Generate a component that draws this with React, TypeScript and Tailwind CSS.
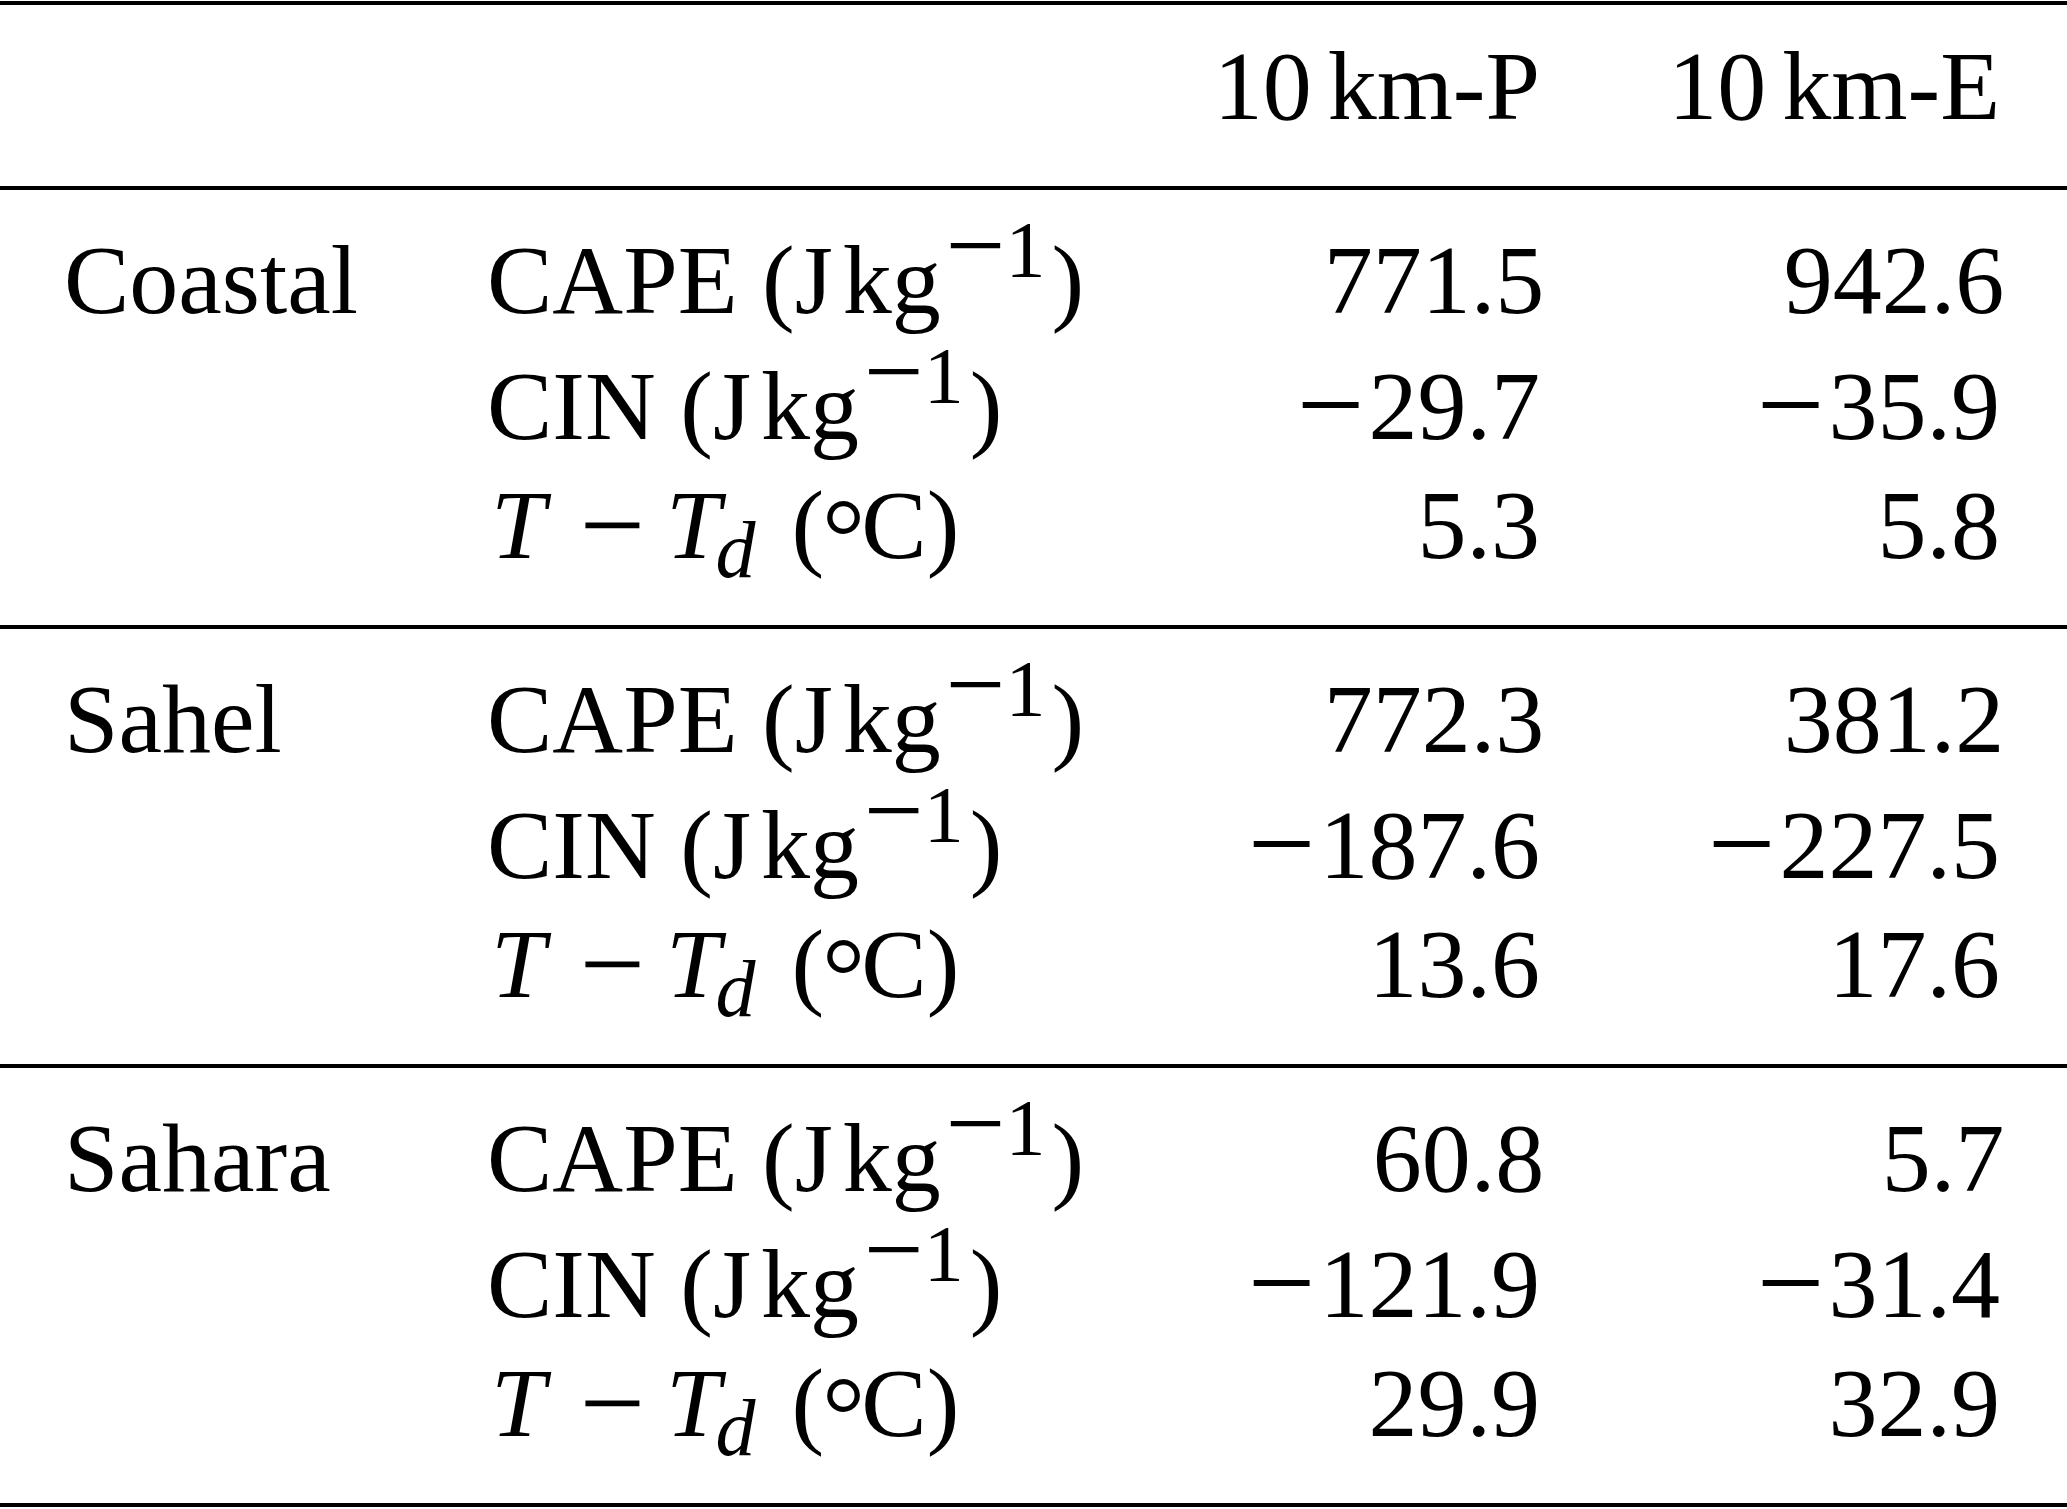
import React from 'react';

type Row = { label: string; kind: 'cape' | 'cin' | 'dew'; p: string; e: string };
type Group = { region: string; rows: Row[] };

const groups: Group[] = [
  {
    region: 'Coastal',
    rows: [
      { label: 'CAPE', kind: 'cape', p: '771.5', e: '942.6' },
      { label: 'CIN', kind: 'cin', p: '-29.7', e: '-35.9' },
      { label: 'T', kind: 'dew', p: '5.3', e: '5.8' },
    ],
  },
  {
    region: 'Sahel',
    rows: [
      { label: 'CAPE', kind: 'cape', p: '772.3', e: '381.2' },
      { label: 'CIN', kind: 'cin', p: '-187.6', e: '-227.5' },
      { label: 'T', kind: 'dew', p: '13.6', e: '17.6' },
    ],
  },
  {
    region: 'Sahara',
    rows: [
      { label: 'CAPE', kind: 'cape', p: '60.8', e: '5.7' },
      { label: 'CIN', kind: 'cin', p: '-121.9', e: '-31.4' },
      { label: 'T', kind: 'dew', p: '29.9', e: '32.9' },
    ],
  },
];

const Rule = () => <div className="h-[4px] w-full bg-black" />;

// wide math minus, sized so it doesn't push the line box
const Minus = () => (
  <span className="relative top-[6px] mr-[4px] text-[120px] leading-[0]">−</span>
);

const Value = ({ v }: { v: string }) =>
  v.startsWith('-') ? (
    <>
      <Minus />
      {v.slice(1)}
    </>
  ) : (
    <>{v}</>
  );

const PerKg = () => (
  <>
    {' '}(J<span className="ml-[10px]">kg</span>
    <span className="relative -top-[36px] leading-[0]">
      <span className="relative top-[4px] ml-[5px] text-[106px]">−</span>
      <span className="text-[80px]">1</span>
    </span>
    <span className="ml-[6px]">)</span>
  </>
);

const Quantity = ({ kind }: { kind: Row['kind'] }) => {
  if (kind === 'cape')
    return (
      <span>
        CAPE
        <PerKg />
      </span>
    );
  if (kind === 'cin')
    return (
      <span>
        CIN
        <PerKg />
      </span>
    );
  return (
    <span>
      <i className="ml-[4px]">T</i>
      <span className="relative top-[6px] ml-[34px] text-[116px] leading-[0]">−</span>
      <i className="ml-[21px]">T</i>
      <i className="relative top-[19px] -ml-[5px] text-[80px] leading-[0]">d</i>
      <span className="ml-[36px]">(</span>
      <span className="relative top-[15px] -ml-[2px] text-[108px] leading-[0]">°</span>
      <span className="-ml-[4px]">C)</span>
    </span>
  );
};

const rowHeights = ['h-[126px]', 'h-[119px]', 'h-[120px]'];

export default function App() {
  return (
    <div
      className="w-[2067px] h-[1509px] bg-white pt-px text-black text-[98px] leading-[120px] whitespace-nowrap"
      style={{ fontFamily: '"Liberation Serif", "Times New Roman", serif' }}
    >
      <Rule />
      <div className="grid grid-cols-[487px_1fr_460px_460px] pr-[67px] pt-[21px] pb-[40px]">
        <div />
        <div />
        <div className="h-[120px] text-right">
          10<span className="ml-[16px]">km-P</span>
        </div>
        <div className="h-[120px] text-right">
          10<span className="ml-[16px]">km-E</span>
        </div>
      </div>
      {groups.map((g) => (
        <div key={g.region}>
          <Rule />
          <div className="pt-[30px] pb-[40px]">
            {g.rows.map((r, i) => (
              <div
                key={r.kind}
                className={`grid grid-cols-[487px_1fr_460px_460px] pr-[67px] ${rowHeights[i]}`}
              >
                <div className="pl-[64px]">{i === 0 ? g.region : ''}</div>
                <div>
                  <Quantity kind={r.kind} />
                </div>
                <div className="text-right">
                  <Value v={r.p} />
                </div>
                <div className="text-right">
                  <Value v={r.e} />
                </div>
              </div>
            ))}
          </div>
        </div>
      ))}
      <Rule />
    </div>
  );
}
